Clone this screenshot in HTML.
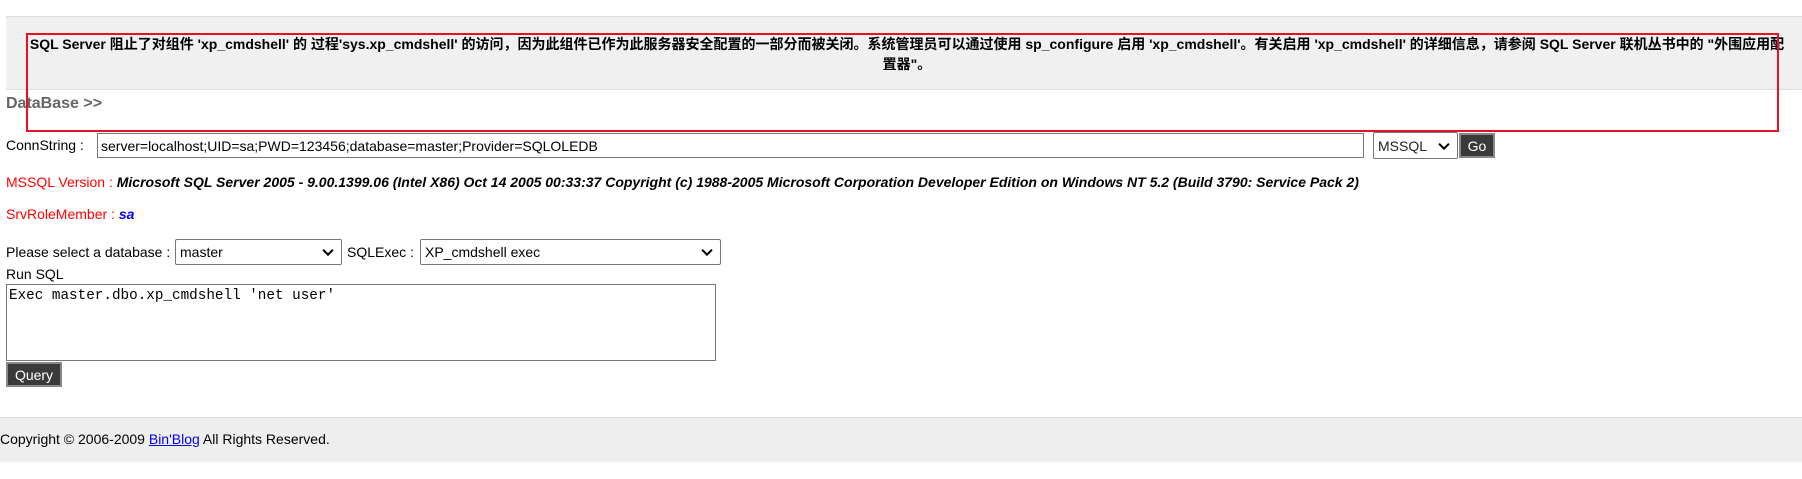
<!DOCTYPE html>
<html><head><meta charset="utf-8"><style>
body{margin:0;width:1802px;height:479px;background:#fff;font-family:"Liberation Sans","Noto Sans CJK SC",sans-serif;font-size:14px;color:#000;position:relative;overflow:hidden}
.a{position:absolute;white-space:nowrap}
.box{position:absolute;left:6px;top:16px;width:1796px;height:72px;background:#f0f0f0;border-top:1px solid #ddd;border-bottom:1px solid #ddd}
.err{position:absolute;left:26px;top:34px;width:1762px;text-align:center;font-weight:bold;font-size:14px;line-height:20px}
.red{position:absolute;left:26px;top:33px;width:1749px;height:95px;border:2px solid #e81123}
.inp{position:absolute;border:1px solid #777;background:#fff;box-sizing:border-box;font-size:14px;padding:0 3px;display:flex;align-items:center}
.sel{position:absolute;border:1px solid #777;border-radius:2px;background:#fff;box-sizing:border-box;font-size:14px;padding:0 4px;display:flex;align-items:center}
.sel:after{content:"";position:absolute;right:9px;top:50%;width:6px;height:6px;border-right:2px solid #000;border-bottom:2px solid #000;transform:translateY(-70%) rotate(45deg)}
.btn{position:absolute;background:#3a3a3a;color:#fff;border:2px solid #888;box-sizing:border-box;display:flex;align-items:center;justify-content:center;font-size:14px}
</style></head><body>
<div class="box"></div>
<div class="err">SQL Server 阻止了对组件 'xp_cmdshell' 的 过程'sys.xp_cmdshell' 的访问，因为此组件已作为此服务器安全配置的一部分而被关闭。系统管理员可以通过使用 sp_configure 启用 'xp_cmdshell'。有关启用 'xp_cmdshell' 的详细信息，请参阅 SQL Server 联机丛书中的 "外围应用配置器"。</div>
<div class="a" style="left:6px;top:95px;font-weight:bold;color:#666;font-size:16px">DataBase &gt;&gt;</div>
<div class="red"></div>
<div class="a" style="left:6px;top:137px">ConnString :</div>
<div class="inp" style="left:97px;top:133px;width:1267px;height:25px">server=localhost;UID=sa;PWD=123456;database=master;Provider=SQLOLEDB</div>
<div class="sel" style="left:1373px;top:132px;width:85px;height:27px;color:#222">MSSQL</div>
<div class="btn" style="left:1459px;top:133px;width:36px;height:25px">Go</div>
<div class="a" style="left:6px;top:174px"><span style="color:#f00">MSSQL Version : </span><b><i>Microsoft SQL Server 2005 - 9.00.1399.06 (Intel X86) Oct 14 2005 00:33:37 Copyright (c) 1988-2005 Microsoft Corporation Developer Edition on Windows NT 5.2 (Build 3790: Service Pack 2)</i></b></div>
<div class="a" style="left:6px;top:206px"><span style="color:#f00">SrvRoleMember : </span><b><i style="color:#00f">sa</i></b></div>
<div class="a" style="left:6px;top:244px">Please select a database :</div>
<div class="sel" style="left:175px;top:239px;width:167px;height:26px">master</div>
<div class="a" style="left:347px;top:244px">SQLExec :</div>
<div class="sel" style="left:420px;top:239px;width:301px;height:26px">XP_cmdshell exec</div>
<div class="a" style="left:6px;top:266px">Run SQL</div>
<div style="position:absolute;left:6px;top:284px;width:710px;height:77px;border:1px solid #777;box-sizing:border-box;font-family:'Liberation Mono',monospace;font-size:14.3px;padding:3px 2px">Exec master.dbo.xp_cmdshell 'net user'</div>
<div class="btn" style="left:6px;top:362px;width:56px;height:25px">Query</div>
<div style="position:absolute;left:0;top:417px;width:1802px;height:44px;background:#eee;border-top:1px solid #ddd"></div>
<div class="a" style="left:0;top:431px;font-size:14px">Copyright © 2006-2009 <span style="color:#00e;text-decoration:underline">Bin'Blog</span> All Rights Reserved.</div>
</body></html>
